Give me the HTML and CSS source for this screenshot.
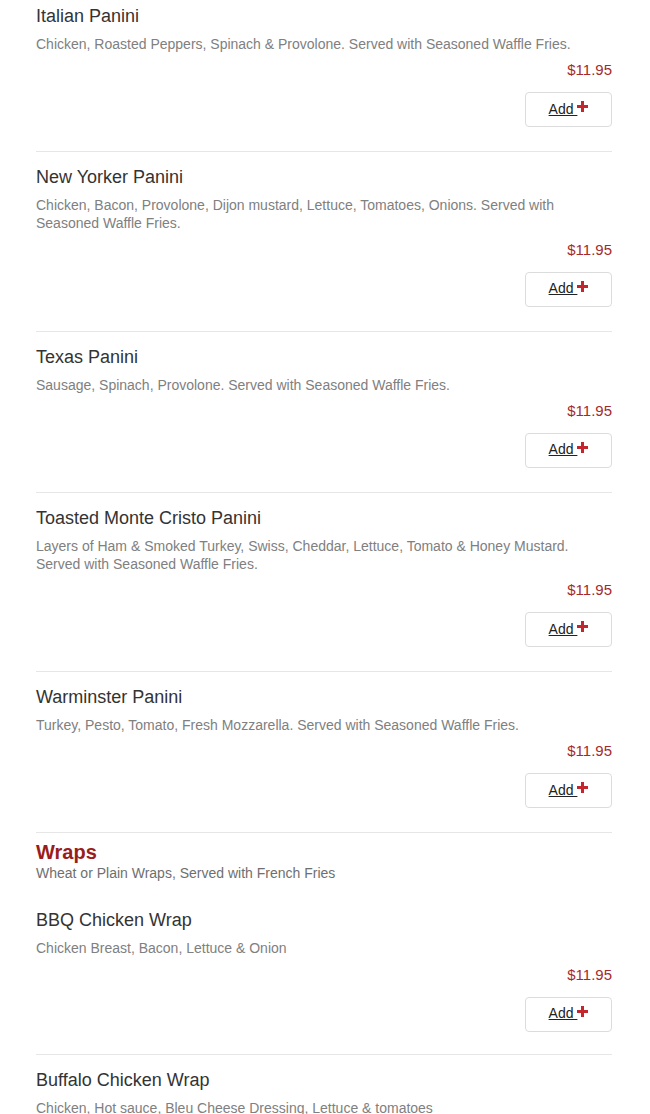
FILE: index.html
```html
<!DOCTYPE html>
<html>
<head>
<meta charset="utf-8">
<link rel="stylesheet" href="styles.css">
</head>
<body>
<div class="menu">
  <div class="item first">
    <div class="title">Italian Panini</div>
    <div class="desc">Chicken, Roasted Peppers, Spinach &amp; Provolone. Served with Seasoned Waffle Fries.</div>
    <div class="price">$11.95</div>
    <div class="actions"><button class="add"><span class="lbl">Add </span><span class="plus"></span></button></div>
  </div>
  <div class="item">
    <div class="title">New Yorker Panini</div>
    <div class="desc">Chicken, Bacon, Provolone, Dijon mustard, Lettuce, Tomatoes, Onions. Served with Seasoned Waffle Fries.</div>
    <div class="price">$11.95</div>
    <div class="actions"><button class="add"><span class="lbl">Add </span><span class="plus"></span></button></div>
  </div>
  <div class="item">
    <div class="title">Texas Panini</div>
    <div class="desc">Sausage, Spinach, Provolone. Served with Seasoned Waffle Fries.</div>
    <div class="price">$11.95</div>
    <div class="actions"><button class="add"><span class="lbl">Add </span><span class="plus"></span></button></div>
  </div>
  <div class="item">
    <div class="title">Toasted Monte Cristo Panini</div>
    <div class="desc">Layers of Ham &amp; Smoked Turkey, Swiss, Cheddar, Lettuce, Tomato &amp; Honey Mustard. Served with Seasoned Waffle Fries.</div>
    <div class="price">$11.95</div>
    <div class="actions"><button class="add"><span class="lbl">Add </span><span class="plus"></span></button></div>
  </div>
  <div class="item">
    <div class="title">Warminster Panini</div>
    <div class="desc">Turkey, Pesto, Tomato, Fresh Mozzarella. Served with Seasoned Waffle Fries.</div>
    <div class="price">$11.95</div>
    <div class="actions"><button class="add"><span class="lbl">Add </span><span class="plus"></span></button></div>
  </div>
  <div class="section">
    <div class="section-title">Wraps</div>
    <div class="section-sub">Wheat or Plain Wraps, Served with French Fries</div>
  </div>
  <div class="item after-section">
    <div class="title">BBQ Chicken Wrap</div>
    <div class="desc">Chicken Breast, Bacon, Lettuce &amp; Onion</div>
    <div class="price">$11.95</div>
    <div class="actions"><button class="add"><span class="lbl">Add </span><span class="plus"></span></button></div>
  </div>
  <div class="item">
    <div class="title">Buffalo Chicken Wrap</div>
    <div class="desc">Chicken, Hot sauce, Bleu Cheese Dressing, Lettuce &amp; tomatoes</div>
    <div class="price">$11.95</div>
    <div class="actions"><button class="add"><span class="lbl">Add </span><span class="plus"></span></button></div>
  </div>
</div>
</body>
</html>
```
FILE: styles.css
```css
html, body {
  margin: 0;
  padding: 0;
  background: #fff;
  font-family: "Liberation Sans", Arial, sans-serif;
}
.menu {
  width: 576px;
  margin-left: 36px;
}
.item {
  border-top: 1px solid #e6e6e6;
  padding: 15px 0 24px;
}
.item.first {
  border-top: none;
  padding-top: 6px;
}
.item.after-section {
  border-top: none;
  padding-top: 28px;
  padding-bottom: 22px;
}
.title {
  font-size: 18px;
  line-height: 20px;
  color: #333;
}
.desc {
  margin-top: 9px;
  font-size: 14px;
  line-height: 18px;
  color: #808080;
  padding-right: 30px;
}
.price {
  margin-top: 7.25px;
  font-size: 15px;
  line-height: 20px;
  color: #a52a2a;
  text-align: right;
}
.actions {
  display: flex;
  justify-content: flex-end;
  margin-top: 12px;
}
.add {
  width: 87px;
  height: 35px;
  border: 1px solid #dcdcdc;
  border-radius: 4px;
  background: #fff;
  display: flex;
  align-items: center;
  justify-content: center;
  padding: 0 0 2px;
  font-family: "Liberation Sans", Arial, sans-serif;
  font-size: 14px;
  color: #222;
  cursor: pointer;
}
.lbl {
  text-decoration: underline;
  white-space: pre;
}
.plus {
  position: relative;
  display: inline-block;
  width: 11px;
  height: 11px;
  margin-top: -4px;
}
.plus::before, .plus::after {
  content: "";
  position: absolute;
  background: #c1272d;
}
.plus::before {
  left: 0;
  top: 4px;
  width: 11px;
  height: 3px;
}
.plus::after {
  left: 4px;
  top: 0;
  width: 3px;
  height: 11px;
}
.section {
  border-top: 1px solid #e6e6e6;
  padding-top: 8px;
}
.section-title {
  font-size: 20px;
  line-height: 22px;
  font-weight: bold;
  color: #9b1c1c;
}
.section-sub {
  font-size: 14px;
  line-height: 18px;
  color: #6f6f6f;
  margin-top: 1px;
}
```
